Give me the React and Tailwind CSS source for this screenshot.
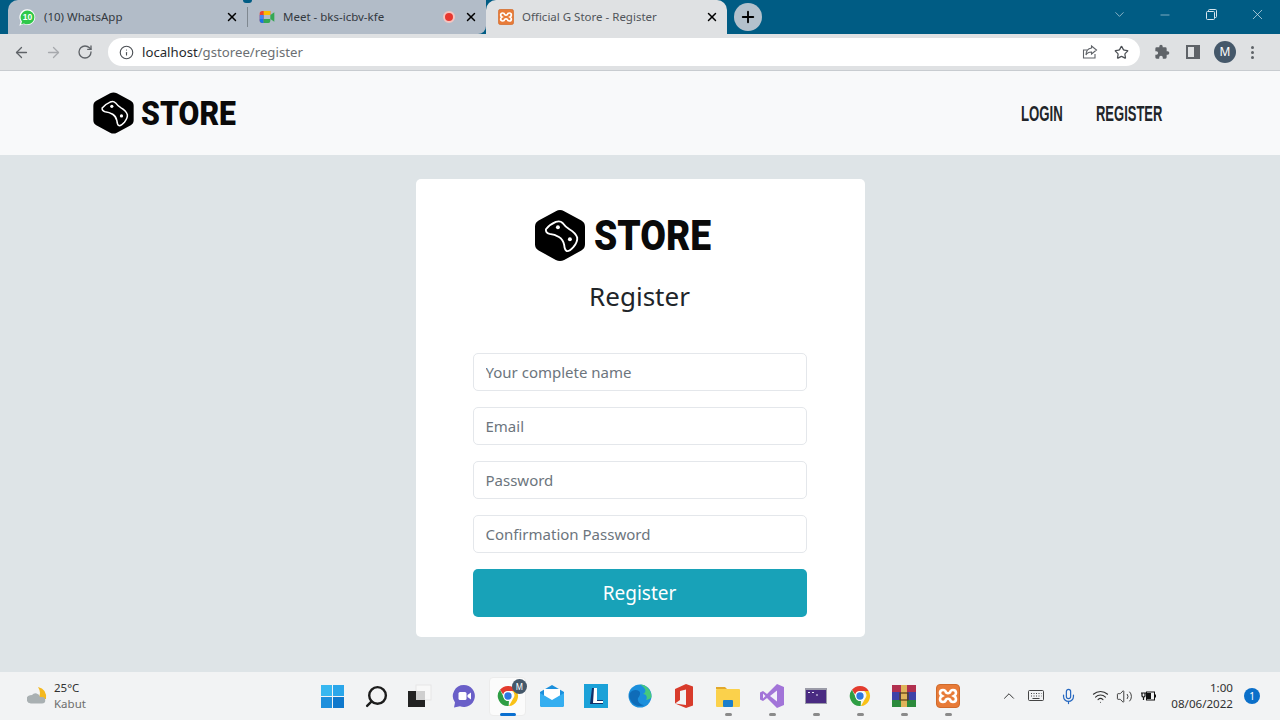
import React from "react";
import { ArrowLeft, ArrowRight, RotateCw, Info, Star, ChevronDown, Minus, X, Plus, ChevronUp, Mic, Wifi, Volume2, Search } from "lucide-react";

const UI = "font-['Noto_Sans','Open_Sans',sans-serif]";

function Logo({ width, height }) {
  return (
    <svg width={width} height={height} viewBox="1 1 48 50" className="shrink-0">
      <path d="M25 1.500 Q27 1.500 29 2.600 L45.500 11.500 Q49 13.500 49 17.500 L49 34.500 Q49 38.500 45.500 40.500 L29 49.400 Q25 51.400 21 49.400 L4.500 40.500 Q1 38.500 1 34.500 L1 17.500 Q1 13.500 4.500 11.500 L21 2.600 Q23 1.500 25 1.500 Z" fill="#000" />
      <path d="M11.500 20 Q15 15.500 21 13 Q25 11.500 27.500 14 Q30 17.500 34 20 Q40 23.500 41.500 28 Q42 32 38 37 Q34 41.500 31.500 41 Q29.500 40 29 35 Q28 30 24 27.500 Q20 25 15 24.500 Q11 23.500 11.500 20 Z" fill="none" stroke="#fff" strokeWidth="1.800" strokeLinejoin="round" />
      <circle cx="23" cy="18" r="1.900" fill="#fff" />
      <circle cx="34.500" cy="29.500" r="1.900" fill="#fff" />
    </svg>
  );
}

function ChromeIcon({ size = 22 }) {
  return (
    <svg width={size} height={size} viewBox="0 0 48 48">
      <path d="M24 2a22 22 0 0 1 19 11H24a11 11 0 0 0-10.500 7.500L6.500 10.500A22 22 0 0 1 24 2z" fill="#e33b2e" />
      <path d="M43 13a22 22 0 0 1-17 33l9-16a11 11 0 0 0-2-17z" fill="#f9c116" />
      <path d="M6.500 10.500 15 27a11 11 0 0 0 11 8l-.5 11A22 22 0 0 1 6.500 10.500z" fill="#2f9e44" />
      <circle cx="24" cy="24" r="10.500" fill="#fff" />
      <circle cx="24" cy="24" r="8" fill="#2f77e0" />
    </svg>
  );
}

function XamppIcon({ size = 16 }) {
  return (
    <svg width={size} height={size} viewBox="0 0 24 24" className="shrink-0">
      <rect x="0.500" y="0.500" width="23" height="23" rx="3.500" fill="#e87b38" stroke="#cf6a2c" />
      <path d="M7 6 Q9.500 6 10 8.500 Q12 10 14 8.500 Q14.500 6 17 6 Q20 6 20 9 Q20 11 18 12 Q20 13 20 15 Q20 18 17 18 Q14.500 18 14 15.500 Q12 14 10 15.500 Q9.500 18 7 18 Q4 18 4 15 Q4 13 6 12 Q4 11 4 9 Q4 6 7 6 Z" fill="none" stroke="#fff" strokeWidth="2.600" />
    </svg>
  );
}

function WhatsIcon() {
  return (
    <svg width="17" height="17" viewBox="0 0 24 24" className="shrink-0">
      <path d="M12 .5a11 11 0 0 1 0 22q-3 0-5.500-1.400L.5 23.500l1.900-6A11 11 0 0 1 12 .5z" fill="#fff" />
      <path d="M12 2a9.800 9.800 0 0 1 0 19.600q-2.800 0-5-1.300l-4 1.200 1.200-3.900A9.800 9.800 0 0 1 12 2z" fill="#2fc84a" />
      <text x="12" y="16" textAnchor="middle" fontSize="12" fontWeight="700" fill="#fff" fontFamily="Liberation Sans">10</text>
    </svg>
  );
}

function MeetIcon() {
  return (
    <svg width="16" height="14" viewBox="0 0 24 20" className="shrink-0">
      <path d="M5 1h12v6H7v12H5a4 4 0 0 1-4-4V5a4 4 0 0 1 4-4z" fill="#ea4335" />
      <path d="M7 1h10v6H7z" fill="#fbbc04" />
      <path d="M1 13h6v6H5a4 4 0 0 1-4-4z" fill="#1a73e8" />
      <path d="M7 13h10v3a3 3 0 0 1-3 3H7z" fill="#34a853" />
      <path d="M17 7l6-4v14l-6-4z" fill="#34a853" />
      <path d="M1 7h6v6H1z" fill="#4285f4" />
    </svg>
  );
}

function TabClose() {
  return <X size={14} strokeWidth={2.500} className="text-black shrink-0" />;
}

function Tab({ icon, title, extra, active, width, pl, className = "" }) {
  return (
    <div className={`${width} ${pl} ${active ? "bg-[#dfe1e3] rounded-t-[10px] text-[#50555a]" : "bg-[#b2bcc8] text-[#33393f]"} ${className} h-[34px] flex items-center pr-[8px] gap-[8px] text-[11.500px] shrink-0`}>
      {icon}
      <span className="flex-1 truncate">{title}</span>
      {extra}
      <TabClose />
    </div>
  );
}

function TopBar() {
  return (
    <div className={`h-[34px] bg-[#005c84] flex items-end relative ${UI}`}>
      <div className="w-[8px] shrink-0" />
      <Tab width="w-[239px]" pl="pl-[11px]" className="rounded-tl-[10px]" icon={<WhatsIcon />} title="(10) WhatsApp" />
      <div className="w-[1px] h-[34px] bg-[#b2bcc8] shrink-0 flex items-center relative">
        <div className="w-[1px] h-[20px] bg-[#7f8890]" />
        <div className="absolute -left-[4px] top-0 w-[9px] h-[3px] rounded-b-full bg-[#005c84]" />
      </div>
      <Tab
        width="w-[238px]"
        pl="pl-[11px]"
        className="rounded-br-[8px]"
        icon={<MeetIcon />}
        title="Meet - bks-icbv-kfe"
        extra={<span className="w-[12px] h-[12px] rounded-full bg-[#e8372f] border-[2px] border-[#f5c4c0] shrink-0 mr-[1px]" />}
      />
      <Tab width="w-[241px]" pl="pl-[12px]" active icon={<XamppIcon />} title="Official G Store - Register" />
      <div className="ml-[7px] self-center w-[28px] h-[28px] rounded-full bg-[#b4c1cc] flex items-center justify-center shrink-0">
        <Plus size={18} strokeWidth={2.500} className="text-black" />
      </div>
      <div className="flex-1" />
      <div className="flex items-center self-start h-[29px] text-[#d8e6ee]">
        <div className="w-[46px] flex justify-center"><ChevronDown size={15} strokeWidth={1} /></div>
        <div className="w-[46px] flex justify-center"><Minus size={14} strokeWidth={1} /></div>
        <div className="w-[46px] flex justify-center">
          <svg width="11" height="11" viewBox="0 0 11 11" fill="none" stroke="currentColor"><rect x="0.500" y="2.500" width="8" height="8" rx="1" /><path d="M2.500 2.500V1.500a1 1 0 0 1 1-1h6a1 1 0 0 1 1 1v6a1 1 0 0 1-1 1h-1" /></svg>
        </div>
        <div className="w-[46px] flex justify-center"><X size={17} strokeWidth={1} /></div>
      </div>
    </div>
  );
}

function Toolbar() {
  return (
    <div className={`h-[37px] bg-[#dfe1e3] border-b border-[#c8ccd0] flex items-center ${UI}`}>
      <div className="w-[108px] shrink-0 flex items-center pl-[13px] gap-[15px] text-[#5f6368]">
        <ArrowLeft size={17} strokeWidth={1.800} />
        <ArrowRight size={17} strokeWidth={1.800} className="text-[#a6a9ad]" />
        <RotateCw size={16} strokeWidth={2} />
      </div>
      <div className="w-[1032px] h-[28px] bg-white rounded-full flex items-center pl-[11px] pr-[10px]">
        <Info size={15} strokeWidth={1.800} className="text-[#4b4f54] shrink-0" />
        <div className="ml-[8px] flex-1 text-[13.200px] leading-[18px] pb-[1px] text-[#6b6f73]"><span className="text-[#26292c]">localhost</span>/gstoree/register</div>
        <svg width="16" height="16" viewBox="0 0 16 16" fill="none" stroke="#5f6368" strokeWidth="1.100" className="mr-[16px]">
          <path d="M13 10v4H1.500V6H5" />
          <path d="M9.500 2l5 4-5 4V8C7 8 5 9 4 11c0-4 2-6.500 5.500-7z" />
        </svg>
        <Star size={15} strokeWidth={2} className="text-[#4b4f54] mr-[1px]" />
      </div>
      <div className="flex items-center text-[#5f6368]">
        <svg width="16" height="16" viewBox="0 0 24 24" fill="#5f6368" className="ml-[14px]">
          <path d="M20.500 11H19V7a2 2 0 0 0-2-2h-4V3.500a2.500 2.500 0 0 0-5 0V5H4a2 2 0 0 0-2 2v3.800h1.500a2.700 2.700 0 0 1 0 5.400H2V20a2 2 0 0 0 2 2h3.800v-1.500a2.700 2.700 0 0 1 5.400 0V22H17a2 2 0 0 0 2-2v-4h1.500a2.500 2.500 0 0 0 0-5z" />
        </svg>
        <div className="ml-[16px] w-[14px] h-[14px] border-[2px] border-[#5f6368] border-r-[6px]" />
        <div className="ml-[14px] w-[22px] h-[22px] rounded-full bg-[#45586a] text-white text-[12px] flex items-center justify-center">M</div>
        <div className="ml-[15px] flex flex-col gap-[2px]">
          <span className="w-[3px] h-[3px] rounded-full bg-[#5f6368]" />
          <span className="w-[3px] h-[3px] rounded-full bg-[#5f6368]" />
          <span className="w-[3px] h-[3px] rounded-full bg-[#5f6368]" />
        </div>
      </div>
    </div>
  );
}

function Nav() {
  return (
    <div className="h-[84px] bg-[#f8f9fa] flex items-center pl-[93px] pr-[118px] shrink-0">
      <Logo width={41} height={42} />
      <span className="ml-[7px] w-[96px] inline-block origin-left scale-x-[0.888] whitespace-nowrap font-['Roboto',sans-serif] font-black text-[34px] text-[#0a0a0a] leading-none">STORE</span>
      <div className="flex-1" />
      <div className="flex gap-[33px] font-['Liberation_Sans',sans-serif] font-bold text-[22px] text-[#212529]">
        <span className="w-[42px] inline-block origin-left scale-x-[0.6] whitespace-nowrap">LOGIN</span>
        <span className="w-[66px] inline-block origin-left scale-x-[0.59] whitespace-nowrap">REGISTER</span>
      </div>
    </div>
  );
}

function Field({ placeholder }) {
  return (
    <input
      readOnly
      placeholder={placeholder}
      className="w-full h-[38px] bg-white border border-[#e4e7eb] rounded-[5px] px-[12px] text-[15px] outline-none placeholder:text-[#6c757d]"
    />
  );
}

function Card() {
  return (
    <div className={`w-[449px] h-[458px] bg-white rounded-[5px] pl-[57px] pr-[58px] pt-[30px] flex flex-col ${UI}`}>
      <div className="flex items-center pl-[62px] h-[53px]">
        <Logo width={50} height={53} />
        <span className="ml-[9px] w-[118px] inline-block origin-left scale-x-[0.887] whitespace-nowrap font-['Roboto',sans-serif] font-black text-[42px] text-[#0a0a0a] leading-none">STORE</span>
      </div>
      <h1 className="text-center text-[26px] leading-none text-[#212529] mt-[21px] h-[29px]">Register</h1>
      <div className="mt-[41px] flex flex-col gap-[16px]">
        <Field placeholder="Your complete name" />
        <Field placeholder="Email" />
        <Field placeholder="Password" />
        <Field placeholder="Confirmation Password" />
        <button className="h-[48px] bg-[#18a2b8] text-white text-[19px] rounded-[5px]">Register</button>
      </div>
    </div>
  );
}

function Slot({ children, dot, active }) {
  return (
    <div className="w-[44px] h-[48px] flex flex-col items-center justify-center relative">
      {active && <div className="absolute left-[3px] top-[5px] w-[37px] h-[39px] bg-[#fbfbfb] rounded-[4px] border border-[#ececec]" />}
      <div className="relative h-[26px] flex items-center justify-center">{children}</div>
      {dot && <div className="absolute bottom-[4px] w-[7px] h-[3px] rounded-full bg-[#8a8a8a]" />}
      {active && <div className="absolute bottom-[4px] w-[16px] h-[3px] rounded-full bg-[#0a6fd0]" />}
    </div>
  );
}

function TaskIcons() {
  return (
    <div className="flex w-[660px] shrink-0">
      <Slot>
        <div className="grid grid-cols-2 gap-[1px] w-[23px] h-[23px]">
          <div className="bg-[#37b7f0]" /><div className="bg-[#2aa6ea]" /><div className="bg-[#1e8fdc]" /><div className="bg-[#0f78cc]" />
        </div>
      </Slot>
      <Slot><Search size={25} strokeWidth={2.300} className="text-[#1c1c1c] -scale-x-100" /></Slot>
      <Slot>
        <svg width="26" height="24" viewBox="0 0 26 24"><rect x="9" y="1" width="15" height="15" fill="#f8f8f8" stroke="#e6e6e6" /><rect x="1" y="7" width="17" height="16" fill="#222" /><rect x="9" y="7" width="9" height="9" fill="#cfcfcf" /></svg>
      </Slot>
      <Slot>
        <svg width="24" height="24" viewBox="0 0 24 24"><path d="M12 1a11 11 0 1 1-4 21.300L2 23.500l1-5A11 11 0 0 1 12 1z" fill="#6a5fc8" /><rect x="6.500" y="8" width="8" height="8" rx="1.500" fill="#fff" /><path d="M15.500 11l3.500-2.500v7L15.500 13z" fill="#fff" /></svg>
      </Slot>
      <Slot active>
        <ChromeIcon size={22} />
        <div className="absolute -right-[8px] -top-[4px] w-[15px] h-[15px] rounded-full bg-[#45586a] text-white text-[8px] flex items-center justify-center">M</div>
      </Slot>
      <Slot>
        <svg width="24" height="22" viewBox="0 0 24 22"><path d="M0 7L12 0l12 7v13a2 2 0 0 1-2 2H2a2 2 0 0 1-2-2z" fill="#1b8fdc" /><path d="M4 4h16v7l-8 5-8-5z" fill="#fff" /><path d="M0 8l12 7 12-7v12a2 2 0 0 1-2 2H2a2 2 0 0 1-2-2z" fill="#35aef0" /></svg>
      </Slot>
      <Slot>
        <svg width="24" height="24" viewBox="0 0 24 24"><rect width="24" height="24" fill="#1ba1d8" /><path d="M8 4h5v12h6v4H6z" fill="#12306a" /><path d="M10 4h3v13h6v2H9z" fill="#fff" /></svg>
      </Slot>
      <Slot>
        <svg width="24" height="24" viewBox="0 0 24 24"><circle cx="12" cy="12" r="11.500" fill="#1b8fdc" /><path d="M23.500 13C23.500 6 18 .5 12 .5 18 4 19 8 15 10c3 0 5 3 3 6 3-.5 5.500-2 5.500-3z" fill="#46c97d" /><path d="M2 9c2-3 6-4 9-2 2 1.500 1 5-1 7-1 3 2 7 6 7-3 2-11 2-14-6-1-2-1-4 0-6z" fill="#0f6cb8" /></svg>
      </Slot>
      <Slot>
        <svg width="20" height="24" viewBox="0 0 20 24"><path d="M1 5L12 0l7 2.500v19L12 24 1 19.500l11 1.500V5.500L6 7v9l-5 3.500z" fill="#d83b2b" /></svg>
      </Slot>
      <Slot dot>
        <svg width="24" height="24" viewBox="0 0 24 24"><path d="M0 3h9l2 2h-11z" fill="#e2a82b" /><rect y="5" width="24" height="18" rx="1" fill="#fbd14b" /><rect x="7" y="16" width="10" height="7" rx="1" fill="#1b7fcc" /></svg>
      </Slot>
      <Slot dot>
        <svg width="24" height="24" viewBox="0 0 24 24"><path d="M17 0l7 3v18l-7 3-10-10-4 3-3-1.500v-7L3 7l4 3z" fill="#a274d8" /><path d="M17 6.500v11L10 12z" fill="#f2eefa" /><path d="M3 9.500v5L5.500 12z" fill="#f2eefa" /></svg>
      </Slot>
      <Slot dot>
        <svg width="22" height="16" viewBox="0 0 22 16"><rect width="22" height="16" fill="#9b9ba8" /><rect x="1" y="2" width="20" height="13" fill="#4a2b82" /><path d="M3 4.500h2M7 4.500h2M11 7h2" stroke="#e5e5f0" strokeWidth="1" /></svg>
      </Slot>
      <Slot dot><ChromeIcon size={22} /></Slot>
      <Slot dot>
        <svg width="24" height="22" viewBox="0 0 24 22"><rect width="24" height="7" fill="#b1304f" /><rect y="7" width="24" height="8" fill="#3f42a8" /><rect y="15" width="24" height="7" fill="#2c8a3c" /><rect x="9" y="0" width="6" height="22" fill="#e0b45a" /><rect x="8" y="8" width="8" height="7" fill="none" stroke="#5b3c13" strokeWidth="1.200" /></svg>
      </Slot>
      <Slot dot><XamppIcon size={24} /></Slot>
    </div>
  );
}

function Tray() {
  return (
    <div className="flex items-center flex-1 pl-[30px] text-[#303030]">
      <ChevronUp size={18} strokeWidth={1.300} />
      <svg width="16" height="12" viewBox="0 0 16 12" fill="none" stroke="#303030" strokeWidth="0.900" className="ml-[10px]">
        <rect x="0.500" y="0.500" width="15" height="10" rx="1" />
        <path d="M3 3.500h1M5.500 3.500h1M8 3.500h1M10.500 3.500h1M13 3.500h.5M3 6h1M5.500 6h1M8 6h1M10.500 6h1M13 6h.5M4.500 8.500h7" />
      </svg>
      <Mic size={17} strokeWidth={1.700} className="ml-[16px] text-[#2668c0]" />
      <Wifi size={17} strokeWidth={1.500} className="ml-[15px]" />
      <Volume2 size={17} strokeWidth={1.300} className="ml-[7px]" />
      <svg width="16" height="12" viewBox="0 0 16 12" className="ml-[7px]">
        <path d="M1 3h5M2 3v3q0 1 1.500 1T5 6V3M3.500 7v3" stroke="#111" strokeWidth="1.200" fill="none" />
        <rect x="6.500" y="2" width="8" height="8" fill="none" stroke="#111" />
        <rect x="7" y="3" width="4" height="6" fill="#111" />
        <rect x="14.500" y="4.500" width="1.500" height="3" fill="#111" />
      </svg>
      <div className="ml-[15px] w-[62px] text-right text-[11.600px] leading-[16px] text-[#303030] shrink-0">
        <div>1:00</div>
        <div className="whitespace-nowrap">08/06/2022</div>
      </div>
      <div className="ml-[11px] w-[16px] h-[16px] rounded-full bg-[#0a6fc9] text-white text-[10px] flex items-center justify-center shrink-0">1</div>
    </div>
  );
}

function Taskbar() {
  return (
    <div className={`h-[48px] bg-[#f2f3f4] flex items-center shrink-0 ${UI}`}>
      <div className="w-[310px] shrink-0 flex items-center pl-[27px]">
        <svg width="20" height="18" viewBox="0 0 20 18">
          <path d="M11 0 Q20 2 19 12 L11 12 Q15 6 11 0 Z" fill="#f4b81e" />
          <path d="M5 8a4.500 4.500 0 0 1 8 2h2a3 3 0 0 1 0 6.500H4a4.200 4.200 0 0 1-1-8.300z" fill="#a9b0b2" />
        </svg>
        <div className="ml-[7px] text-[11.500px] leading-[16px]">
          <div className="text-[#303030]">25°C</div>
          <div className="text-[#6d6d6d]">Kabut</div>
        </div>
      </div>
      <TaskIcons />
      <Tray />
    </div>
  );
}

export default function App() {
  return (
    <div className="w-[1280px] h-[720px] overflow-hidden flex flex-col bg-[#dee4e7]">
      <TopBar />
      <Toolbar />
      <Nav />
      <main className="flex-1 flex justify-center pt-[24px]">
        <Card />
      </main>
      <Taskbar />
    </div>
  );
}
